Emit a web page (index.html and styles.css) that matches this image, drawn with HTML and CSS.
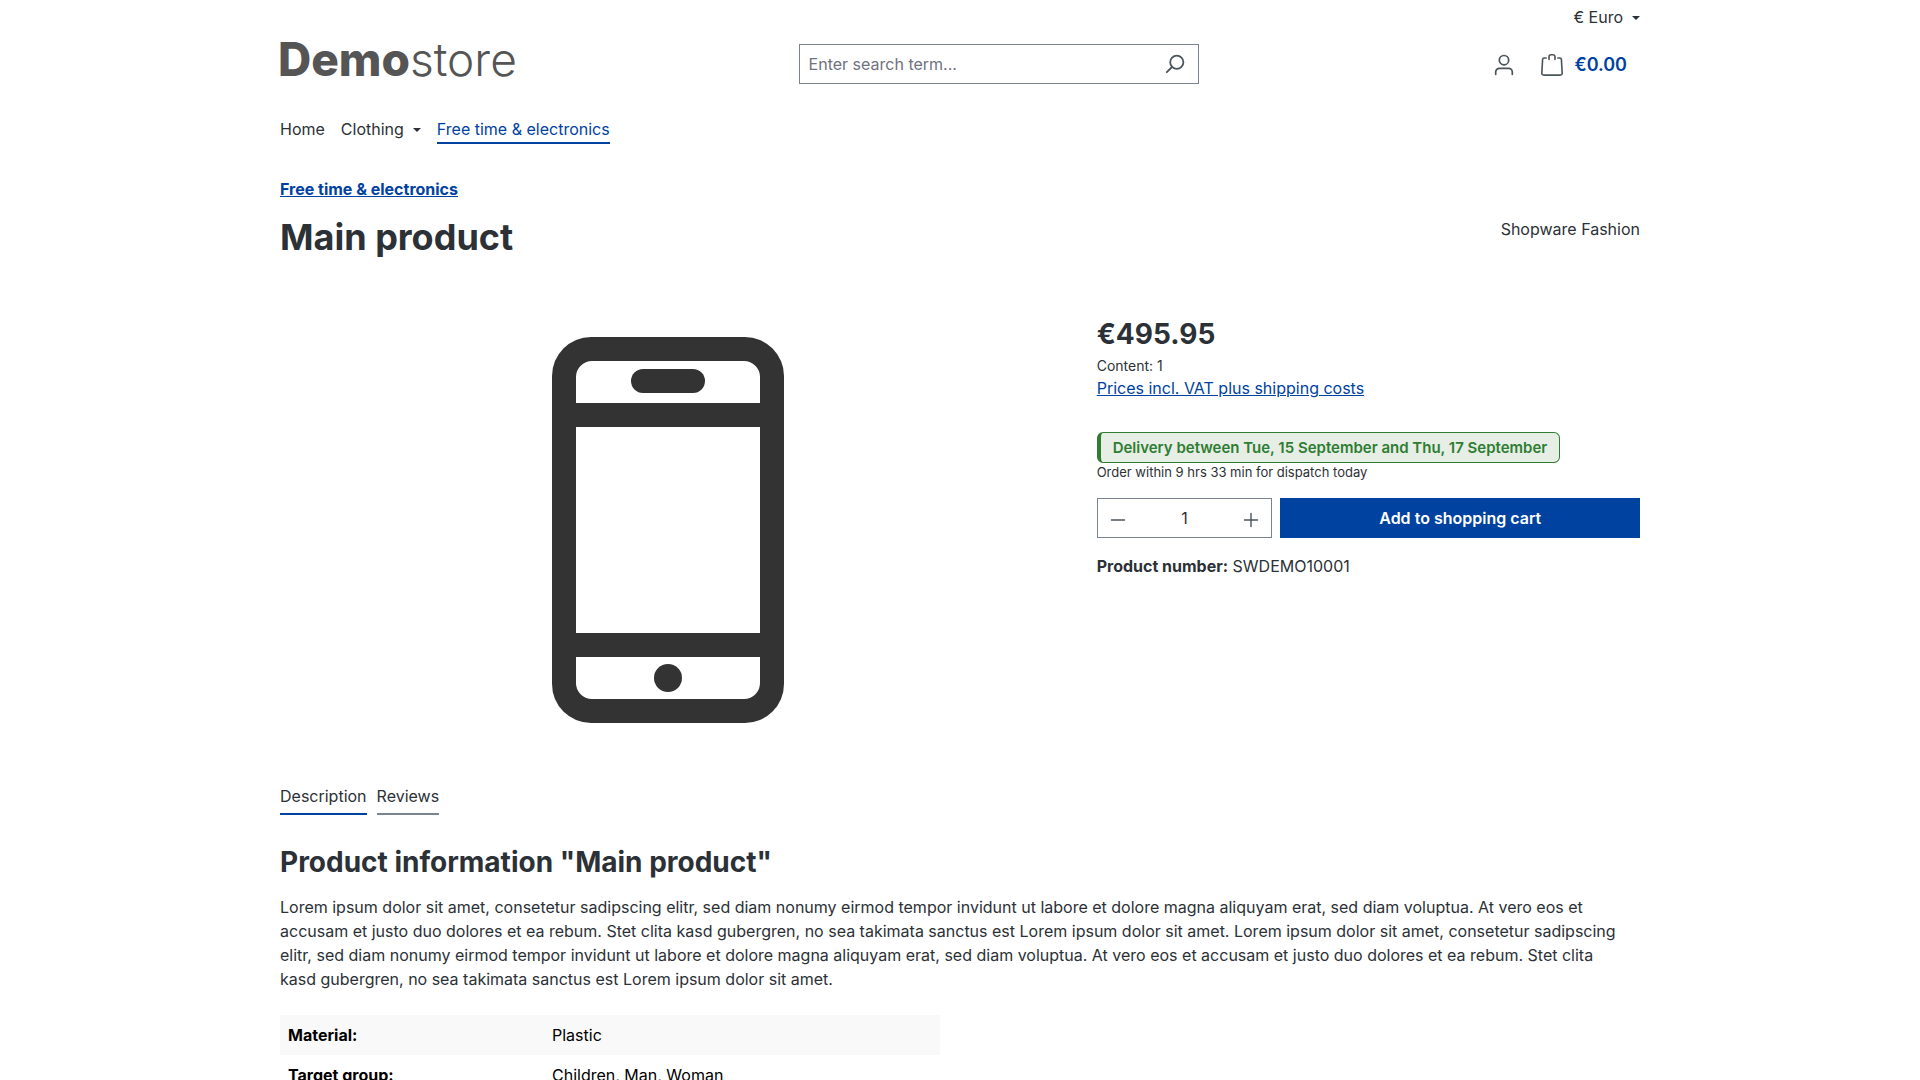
FILE: index.html
```html
<!DOCTYPE html>
<html lang="en">
<head>
    <meta charset="UTF-8">
    <meta name="viewport" content="width=device-width, initial-scale=1.0">
    <title>Main product | Demostore</title>
    <link rel="stylesheet" href="styles.css">
</head>
<body>

    <header class="container">
        <div class="top-bar">
            <button type="button" class="top-bar-btn dropdown-toggle">€ Euro</button>
        </div>

        <div class="header-row">
            <a class="logo" href="#" aria-label="Go to homepage"><strong>Demo</strong>store</a>

            <form class="search">
                <input type="search" class="search-input" placeholder="Enter search term..." aria-label="Enter search term">
                <button type="submit" class="search-btn" aria-label="Search">
                    <svg width="22" height="22" viewBox="0 0 22 22" fill="none" stroke="currentColor" stroke-width="1.8" stroke-linecap="round">
                        <circle cx="12.8" cy="9.2" r="6.6"/>
                        <path d="M8 14 2.8 19.2"/>
                    </svg>
                </button>
            </form>

            <div class="header-actions">
                <button type="button" class="header-btn" aria-label="Your account">
                    <svg width="22" height="22" viewBox="0 0 22 22" fill="none" stroke="currentColor" stroke-width="1.7" stroke-linecap="round">
                        <circle cx="11" cy="6.2" r="4.7"/>
                        <path d="M2.7 20.3V18a3.7 3.7 0 0 1 3.7-3.7h9.2a3.7 3.7 0 0 1 3.7 3.7v2.3"/>
                    </svg>
                </button>
                <a class="header-btn" href="#" aria-label="Shopping cart">
                    <svg width="22" height="22" viewBox="0 0 22 22" fill="none" stroke="currentColor" stroke-width="1.6" stroke-linecap="round" stroke-linejoin="round">
                        <path d="M5.2 4H3.2a1.6 1.6 0 0 0-1.6 1.5L.8 19.2a1.8 1.8 0 0 0 1.8 1.9h16.8a1.8 1.8 0 0 0 1.8-1.9l-.8-13.7A1.6 1.6 0 0 0 18.8 4h-2"/>
                        <path d="M8 5.5V2.8A2 2 0 0 1 10 .8h2a2 2 0 0 1 2 2v2.7"/>
                    </svg>
                    <span class="cart-total">€0.00</span>
                </a>
            </div>
        </div>

        <nav class="main-nav">
            <a class="nav-link" href="#">Home</a>
            <a class="nav-link dropdown-toggle" href="#">Clothing</a>
            <a class="nav-link active" href="#">Free time &amp; electronics</a>
        </nav>
    </header>

    <main class="container">
        <a class="breadcrumb" href="#">Free time &amp; electronics</a>

        <div class="product-heading">
            <h1>Main product</h1>
            <a class="manufacturer" href="#">Shopware Fashion</a>
        </div>

        <div class="product-row">
            <div class="product-gallery">
                <svg class="product-image" viewBox="0 0 232 386" role="img" aria-label="Main product">
                    <rect width="232" height="386" rx="39" fill="#333"/>
                    <path fill="#fff" d="M24 66V40a16 16 0 0 1 16-16h152a16 16 0 0 1 16 16v26z"/>
                    <path fill="#fff" d="M24 90h184v206H24z"/>
                    <path fill="#fff" d="M24 320v25a16 16 0 0 0 16 17h152a16 16 0 0 0 16-17v-25z"/>
                    <rect x="79" y="32" width="74" height="24" rx="12" fill="#333"/>
                    <circle cx="116" cy="341" r="14" fill="#333"/>
                </svg>
            </div>

            <div class="product-buy">
                <p class="price">€495.95</p>
                <p class="price-unit">Content: 1</p>
                <a class="tax-link" href="#">Prices incl. VAT plus shipping costs</a>

                <p class="delivery">Delivery between Tue, 15 September and Thu, 17 September</p>
                <p class="dispatch">Order within 9 hrs 33 min for dispatch today</p>

                <form class="buy-form">
                    <div class="buy-quantity">
                        <div class="quantity">
                            <button type="button" class="quantity-btn" aria-label="Decrease quantity">
                                <svg width="16" height="16" viewBox="0 0 16 16" stroke="currentColor" stroke-width="1.4" stroke-linecap="round"><path d="M1.5 8h13"/></svg>
                            </button>
                            <input type="text" class="quantity-input" value="1" aria-label="Quantity">
                            <button type="button" class="quantity-btn" aria-label="Increase quantity">
                                <svg width="16" height="16" viewBox="0 0 16 16" stroke="currentColor" stroke-width="1.4" stroke-linecap="round"><path d="M1.5 8h13M8 1.5v13"/></svg>
                            </button>
                        </div>
                    </div>
                    <div class="buy-submit">
                        <button type="submit" class="btn-buy">Add to shopping cart</button>
                    </div>
                </form>

                <p class="product-number"><strong>Product number:</strong> SWDEMO10001</p>
            </div>
        </div>

        <div class="tabs">
            <a class="tab active" href="#description">Description</a>
            <a class="tab" href="#reviews">Reviews</a>
        </div>

        <section id="description">
            <h2>Product information "Main product"</h2>
            <p class="description-text">Lorem ipsum dolor sit amet, consetetur sadipscing elitr, sed diam nonumy eirmod tempor invidunt ut labore et dolore magna aliquyam erat, sed diam voluptua. At vero eos et accusam et justo duo dolores et ea rebum. Stet clita kasd gubergren, no sea takimata sanctus est Lorem ipsum dolor sit amet. Lorem ipsum dolor sit amet, consetetur sadipscing elitr, sed diam nonumy eirmod tempor invidunt ut labore et dolore magna aliquyam erat, sed diam voluptua. At vero eos et accusam et justo duo dolores et ea rebum. Stet clita kasd gubergren, no sea takimata sanctus est Lorem ipsum dolor sit amet.</p>

            <table class="properties">
                <tbody>
                    <tr>
                        <th scope="row">Material:</th>
                        <td>Plastic</td>
                    </tr>
                    <tr>
                        <th scope="row">Target group:</th>
                        <td>Children, Man, Woman</td>
                    </tr>
                </tbody>
            </table>
        </section>
    </main>

</body>
</html>
```
FILE: styles.css
```css
* {
    box-sizing: border-box;
}

body {
    margin: 0;
    font-family: Inter, sans-serif;
    font-size: 16px;
    line-height: 24px;
    color: #2b3136;
    background-color: #fff;
}

h1, h2, p {
    margin: 0;
}

a {
    color: inherit;
    text-decoration: none;
}

button, input {
    font: inherit;
    color: inherit;
}

button {
    padding: 0;
    border: none;
    background: none;
    cursor: pointer;
}

svg {
    display: block;
}

.container {
    max-width: 1400px;
    margin: 0 auto;
    padding: 0 20px;
}

/* Header */
.top-bar {
    display: flex;
    justify-content: flex-end;
    padding: 5px 0;
}

.dropdown-toggle::after {
    content: "";
    display: inline-block;
    margin-left: 9px;
    vertical-align: 3px;
    border-top: 4px solid;
    border-left: 4px solid transparent;
    border-right: 4px solid transparent;
}

.header-row {
    display: flex;
    align-items: center;
    justify-content: space-between;
    height: 60px;
}

.logo {
    margin-left: -2px;
    padding-bottom: 11px;
    font-size: 46px;
    line-height: 48px;
    font-weight: 300;
    color: #555;
}

.logo strong {
    font-weight: 800;
}

.search {
    display: flex;
    width: 400px;
    height: 40px;
    border: 1px solid #798490;
}

.search-input {
    flex: 1;
    min-width: 0;
    padding: 0 9px;
    border: none;
    outline: none;
    background: none;
}

.search-input::placeholder {
    color: #6f727f;
    opacity: 1;
}

.search-btn {
    padding: 0 12px;
    color: #4a545b;
}

.header-actions {
    display: flex;
}

.header-btn {
    display: flex;
    align-items: center;
    gap: 11px;
    height: 40px;
    padding: 2px 13px 0;
    color: #4a545b;
}

.cart-total {
    font-size: 18px;
    font-weight: 600;
    color: #0042a0;
}

.main-nav {
    display: flex;
    gap: 16px;
    padding: 23px 0 33px;
}

.nav-link {
    padding-bottom: 1px;
    border-bottom: 2px solid transparent;
}

.nav-link.active {
    color: #0042a0;
    border-color: #0042a0;
}

/* Product */
.breadcrumb {
    font-weight: 700;
    color: #0042a0;
    text-decoration: underline;
}

.product-heading {
    display: flex;
    justify-content: space-between;
    align-items: flex-start;
    padding: 16px 0 58px;
}

h1 {
    font-size: 36px;
    line-height: 40px;
    font-weight: 700;
}

.product-row {
    display: grid;
    grid-template-columns: 7fr 5fr;
    margin: 0 -20px;
}

.product-gallery {
    display: flex;
    align-items: center;
    justify-content: center;
    min-height: 430px;
    padding: 0 20px;
}

.product-image {
    width: 232px;
}

.product-buy {
    padding: 0 20px;
}

.price {
    font-size: 28px;
    line-height: 38px;
    font-weight: 700;
}

.price-unit {
    margin-top: 3px;
    font-size: 14px;
    line-height: 20px;
}

.tax-link {
    color: #0042a0;
    text-decoration: underline;
}

.delivery {
    width: fit-content;
    margin-top: 32px;
    padding: 4px 12px;
    border: 1px solid #2e7d32;
    border-left-width: 4px;
    border-radius: 6px;
    background-color: #e6eee5;
    color: #2e7d32;
    font-size: 15px;
    font-weight: 600;
    line-height: 21px;
}

.dispatch {
    font-size: 13px;
    line-height: 19px;
}

.buy-form {
    display: grid;
    grid-template-columns: minmax(0, 1fr) minmax(0, 2fr);
    margin: 16px -4px;
}

.buy-quantity, .buy-submit {
    padding: 0 4px;
}

.quantity {
    display: flex;
    height: 40px;
    border: 1px solid #798490;
}

.quantity-btn {
    padding: 4px 12px 0;
    color: #4a545b;
}

.quantity-input {
    flex: 1;
    min-width: 0;
    padding: 0;
    border: none;
    outline: none;
    background: none;
    text-align: center;
}

.btn-buy {
    width: 100%;
    height: 40px;
    background-color: #0042a0;
    color: #fff;
    font-weight: 600;
}

/* Tabs */
.tabs {
    display: flex;
    gap: 10px;
    padding: 39px 0 29px;
}

.tab {
    padding-bottom: 5px;
    border-bottom: 2px solid #798490;
}

.tab.active {
    border-color: #0042a0;
}

h2 {
    margin-bottom: 15px;
    font-size: 28px;
    line-height: 36px;
    font-weight: 700;
}

.description-text {
    padding-right: 12px;
}

.properties {
    width: 100%;
    max-width: 660px;
    margin: 24px 0 40px;
    border-collapse: collapse;
    color: #000;
    text-align: left;
}

.properties th, .properties td {
    padding: 8px;
}

.properties th {
    width: 40%;
}

.properties tr:nth-child(odd) {
    background-color: #f9f9f9;
}
```
